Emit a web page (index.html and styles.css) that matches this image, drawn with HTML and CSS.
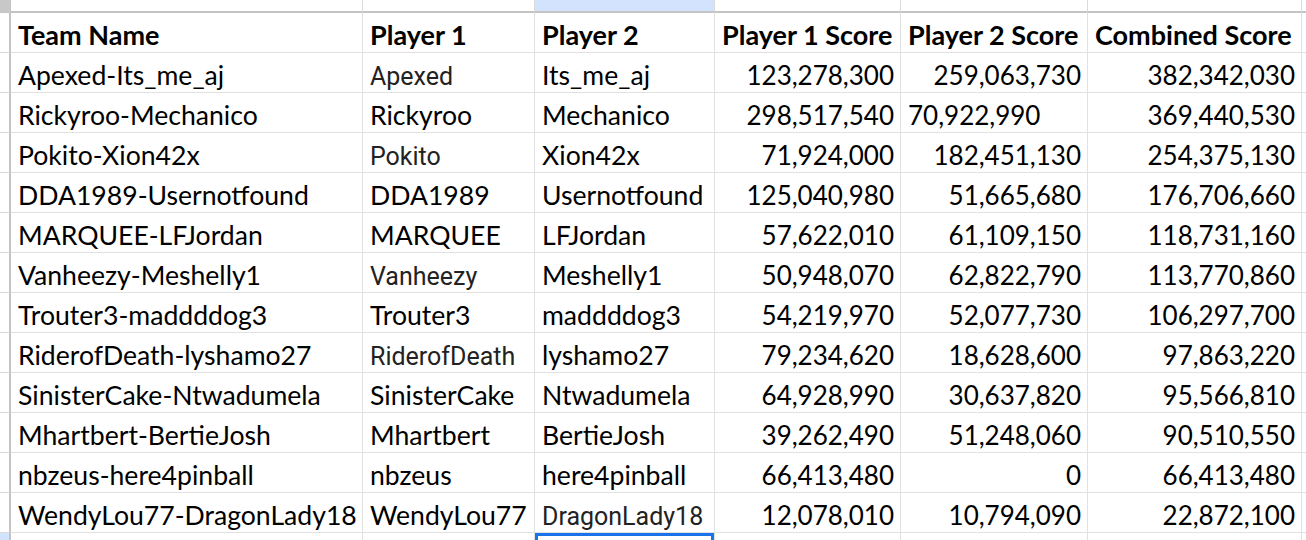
FILE: index.html
```html
<!DOCTYPE html>
<html>
<head>
<meta charset="utf-8">
<link rel="stylesheet" href="styles.css">
</head>
<body>
<div class="sheet">
  <div class="corner"></div>
  <div class="colhdr"></div><div class="colhdr"></div><div class="colhdr sel"></div><div class="colhdr"></div><div class="colhdr"></div><div class="colhdr"></div><div class="colhdr last"></div>

  <div class="rowhdr"></div>
  <div class="cell b">Team Name</div><div class="cell b">Player 1</div><div class="cell b">Player 2</div><div class="cell b">Player 1 Score</div><div class="cell b">Player 2 Score</div><div class="cell b">Combined Score</div><div class="cell"></div>

  <div class="rowhdr"></div>
  <div class="cell">Apexed-Its_me_aj</div><div class="cell alt">Apexed</div><div class="cell">Its_me_aj</div><div class="cell num">123,278,300</div><div class="cell num">259,063,730</div><div class="cell num">382,342,030</div><div class="cell"></div>

  <div class="rowhdr"></div>
  <div class="cell">Rickyroo-Mechanico</div><div class="cell">Rickyroo</div><div class="cell">Mechanico</div><div class="cell num">298,517,540</div><div class="cell numtxt">70,922,990</div><div class="cell num">369,440,530</div><div class="cell"></div>

  <div class="rowhdr"></div>
  <div class="cell">Pokito-Xion42x</div><div class="cell alt">Pokito</div><div class="cell">Xion42x</div><div class="cell num">71,924,000</div><div class="cell num">182,451,130</div><div class="cell num">254,375,130</div><div class="cell"></div>

  <div class="rowhdr"></div>
  <div class="cell">DDA1989-Usernotfound</div><div class="cell">DDA1989</div><div class="cell">Usernotfound</div><div class="cell num">125,040,980</div><div class="cell num">51,665,680</div><div class="cell num">176,706,660</div><div class="cell"></div>

  <div class="rowhdr"></div>
  <div class="cell">MARQUEE-LFJordan</div><div class="cell">MARQUEE</div><div class="cell">LFJordan</div><div class="cell num">57,622,010</div><div class="cell num">61,109,150</div><div class="cell num">118,731,160</div><div class="cell"></div>

  <div class="rowhdr"></div>
  <div class="cell">Vanheezy-Meshelly1</div><div class="cell alt">Vanheezy</div><div class="cell">Meshelly1</div><div class="cell num">50,948,070</div><div class="cell num">62,822,790</div><div class="cell num">113,770,860</div><div class="cell"></div>

  <div class="rowhdr"></div>
  <div class="cell">Trouter3-maddddog3</div><div class="cell">Trouter3</div><div class="cell">maddddog3</div><div class="cell num">54,219,970</div><div class="cell num">52,077,730</div><div class="cell num">106,297,700</div><div class="cell"></div>

  <div class="rowhdr"></div>
  <div class="cell">RiderofDeath-lyshamo27</div><div class="cell alt">RiderofDeath</div><div class="cell">lyshamo27</div><div class="cell num">79,234,620</div><div class="cell num">18,628,600</div><div class="cell num">97,863,220</div><div class="cell"></div>

  <div class="rowhdr"></div>
  <div class="cell">SinisterCake-Ntwadumela</div><div class="cell">SinisterCake</div><div class="cell">Ntwadumela</div><div class="cell num">64,928,990</div><div class="cell num">30,637,820</div><div class="cell num">95,566,810</div><div class="cell"></div>

  <div class="rowhdr"></div>
  <div class="cell">Mhartbert-BertieJosh</div><div class="cell">Mhartbert</div><div class="cell">BertieJosh</div><div class="cell num">39,262,490</div><div class="cell num">51,248,060</div><div class="cell num">90,510,550</div><div class="cell"></div>

  <div class="rowhdr"></div>
  <div class="cell">nbzeus-here4pinball</div><div class="cell">nbzeus</div><div class="cell">here4pinball</div><div class="cell num">66,413,480</div><div class="cell num">0</div><div class="cell num">66,413,480</div><div class="cell"></div>

  <div class="rowhdr"></div>
  <div class="cell">WendyLou77-DragonLady18</div><div class="cell">WendyLou77</div><div class="cell alt">DragonLady18</div><div class="cell num">12,078,010</div><div class="cell num">10,794,090</div><div class="cell num">22,872,100</div><div class="cell"></div>

  <div class="rowhdr selrow"></div>
  <div class="cell"></div><div class="cell"></div><div class="cell active"></div><div class="cell"></div><div class="cell"></div><div class="cell"></div><div class="cell"></div>
</div>
</body>
</html>
```
FILE: styles.css
```css
html, body {
  margin: 0;
  padding: 0;
  background: #ffffff;
  overflow: hidden;
}
.sheet {
  display: grid;
  grid-template-columns: 11px 352px 172px 180px 186px 187px 214px 1fr;
  grid-template-rows: 13px repeat(13, 40px) 40px;
  width: 1306px;
  height: 540px;
  overflow: hidden;
  font-family: "Lato", "Noto Sans", sans-serif;
  font-size: 26.6px;
  color: #000000;
}
.corner {
  background: #c8c8c8;
  border-right: 1px solid #c4c4c4;
  border-bottom: 1px solid #c4c4c4;
}
.colhdr {
  background: #ffffff;
  border-right: 1px solid #dadada;
  border-bottom: 2px solid #c4c4c4;
}
.colhdr.sel {
  background: #d3e3fd;
}
.rowhdr {
  background: #ffffff;
  border-right: 2px solid #c4c4c4;
  border-bottom: 1px solid #dadada;
}
.rowhdr.selrow {
  background: #d3e3fd;
}
.cell {
  box-sizing: border-box;
  border-right: 1px solid #e1e1e1;
  border-bottom: 1px solid #e1e1e1;
  display: flex;
  align-items: flex-end;
  padding: 0 6px 1px 7px;
  white-space: nowrap;
  line-height: 32px;
  min-width: 0;
}
.cell.b {
  font-weight: 700;
  font-size: 27px;
}
.cell.num,
.cell.numtxt {
  font-size: 26px;
}
.cell.num {
  justify-content: flex-end;
}
.cell.alt {
  font-family: "Roboto", "Liberation Sans", sans-serif;
  font-size: 25px;
  color: #222222;
  padding-bottom: 0;
  line-height: 30px;
}
.cell.active {
  box-shadow: inset 0 3px 0 #1a73e8, inset 3px 0 0 #1a73e8, inset -3px 0 0 #1a73e8;
}
```
